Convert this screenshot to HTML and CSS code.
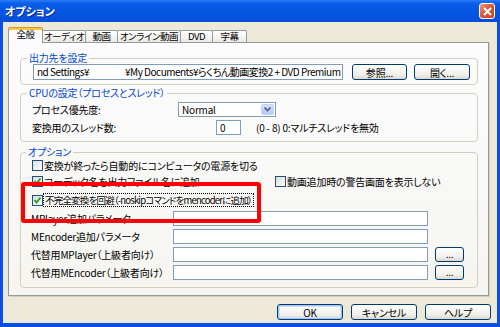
FILE: index.html
```html
<!DOCTYPE html>
<html lang="ja">
<head>
  <meta charset="UTF-8">
  <title>オプション</title>
  <link rel="stylesheet" href="styles.css">
</head>
<body>
<div class="window">
  <div class="titlebar">
    <span class="title">オプション</span>
    <span class="close">
      <svg width="9" height="9" viewBox="0 0 9 9"><path d="M1 1 L8 8 M8 1 L1 8" stroke="#fff" stroke-width="2" fill="none"/></svg>
    </span>
  </div>

  <div class="client">
    <div class="tabs">
      <div class="tab active">全般</div>
      <div class="tab">オーディオ</div>
      <div class="tab">動画</div>
      <div class="tab">オンライン動画</div>
      <div class="tab">DVD</div>
      <div class="tab">字幕</div>
    </div>

    <div class="panel">
      <!-- output folder -->
      <fieldset class="group group-output">
        <legend>出力先を設定</legend>
        <div class="row">
          <div class="textbox path">nd Settings¥<span class="masked"></span>¥My Documents¥らくちん動画変換2 + DVD Premium</div>
          <button class="btn btn-browse">参照...</button>
          <button class="btn btn-open">開く...</button>
        </div>
      </fieldset>

      <!-- cpu -->
      <fieldset class="group group-cpu">
        <legend>CPUの設定（プロセスとスレッド）</legend>
        <div class="row">
          <span class="label label-priority">プロセス優先度:</span>
          <div class="combo">
            <span class="value">Normal</span>
            <span class="drop">
              <svg width="7" height="5" viewBox="0 0 7 5"><path d="M0.5 0.5 L3.5 3.5 L6.5 0.5" stroke="#4d6185" stroke-width="1.6" fill="none"/></svg>
            </span>
          </div>
        </div>
        <div class="row">
          <span class="label label-threads">変換用のスレッド数:</span>
          <div class="textbox threads">0</div>
          <span class="hint">(0 - 8) 0:マルチスレッドを無効</span>
        </div>
      </fieldset>

      <!-- options -->
      <fieldset class="group group-options">
        <legend>オプション</legend>
        <div class="opt opt-first">
          <label class="checkline"><span class="check"></span>変換が終ったら自動的にコンピュータの電源を切る</label>
        </div>
        <div class="opt opt-two">
          <label class="checkline codec"><span class="check checked"><svg width="9" height="9" viewBox="0 0 9 9"><path d="M1.5 4 L3.5 6.5 L7.5 1.5" stroke="#21a121" stroke-width="1.8" fill="none"/></svg></span>コーデック名を出力ファイル名に追加</label>
          <label class="checkline"><span class="check"></span>動画追加時の警告画面を表示しない</label>
        </div>
        <div class="opt">
          <label class="checkline"><span class="check checked"><svg width="9" height="9" viewBox="0 0 9 9"><path d="M1.5 4 L3.5 6.5 L7.5 1.5" stroke="#21a121" stroke-width="1.8" fill="none"/></svg></span><span class="focus">不完全変換を回避（-noskipコマンドをmencoderに追加）</span></label>
        </div>
        <div class="opt param">
          <span class="label">MPlayer追加パラメータ</span>
          <div class="textbox wide"></div>
        </div>
        <div class="opt param">
          <span class="label">MEncoder追加パラメータ</span>
          <div class="textbox wide"></div>
        </div>
        <div class="opt param">
          <span class="label">代替用MPlayer（上級者向け）</span>
          <div class="textbox wide"></div>
          <button class="btn btn-small">...</button>
        </div>
        <div class="opt param">
          <span class="label">代替用MEncoder（上級者向け）</span>
          <div class="textbox wide"></div>
          <button class="btn btn-small">...</button>
        </div>
      </fieldset>
    </div>

    <div class="footer">
      <button class="btn btn-dialog btn-default">OK</button>
      <button class="btn btn-dialog">キャンセル</button>
      <button class="btn btn-dialog">ヘルプ</button>
    </div>
  </div>

  <div class="callout"></div>
</div>
</body>
</html>
```

FILE: styles.css
```css
* { margin: 0; padding: 0; box-sizing: border-box; }
body {
  font-family: "Noto Sans CJK JP", "Noto Sans", sans-serif;
  font-size: 10px;
  font-feature-settings: "palt";
  letter-spacing: -0.2px;
  color: #000;
  background: #fff;
}

.window {
  position: relative;
  width: 500px;
  height: 327px;
  background: #0a4fe2;
  display: flex;
  flex-direction: column;
}

.titlebar {
  flex: none;
  height: 22px;
  display: flex;
  align-items: center;
  justify-content: space-between;
  padding: 0 5px;
  background: linear-gradient(#2a7cf4 0%, #0a5eea 15%, #0458e4 45%, #0453dc 75%, #0650d6 100%);
}

.title {
  color: #fff;
  font-weight: bold;
  font-size: 11px;
  letter-spacing: 0;
  text-shadow: 1px 1px 0 #0a2a9c;
}

.close {
  width: 16px;
  height: 16px;
  border: 1px solid #fff;
  border-radius: 3px;
  background: linear-gradient(135deg, #eb9a80, #db5d3a 45%, #c8421e);
  display: flex;
  align-items: center;
  justify-content: center;
}

.client {
  flex: 1;
  margin: 0 3px 4px;
  background: #ece9d8;
  padding: 5px 8px 3px 5px;
  display: flex;
  flex-direction: column;
}

/* Tabs */
.tabs {
  flex: none;
  height: 15px;
  display: flex;
  align-items: flex-end;
  position: relative;
  z-index: 1;
}

.tab {
  flex: none;
  height: 12px;
  font-size: 9.5px;
  line-height: 11px;
  text-align: center;
  white-space: nowrap;
  letter-spacing: -0.4px;
  border: 1px solid #919b9c;
  border-bottom: none;
  border-radius: 2px 2px 0 0;
  background: linear-gradient(#fff, #f4f3ef 60%, #eae8e0);
}

.tab + .tab { margin-left: -1px; }
.tab:nth-child(1) { width: 35px; }
.tab:nth-child(2) { width: 44px; }
.tab:nth-child(3) { width: 33px; }
.tab:nth-child(4) { width: 64px; }
.tab:nth-child(5) { width: 33px; }
.tab:nth-child(6) { width: 35px; }

.tab.active {
  height: 16px;
  margin-bottom: -1px;
  line-height: 13px;
  background: #fcfcfe;
  border-top: 1px solid #e68b2c;
  box-shadow: inset 0 2px 0 #ffc73c;
  position: relative;
  z-index: 1;
}

.panel {
  flex: 1;
  border: 1px solid #919b9c;
  background: linear-gradient(#fcfcfe, #f6f5f0);
  padding: 9px 10px 0 11px;
  box-shadow: 1px 1px 0 #d3cfbc;
}

/* Group boxes */
.group {
  border: 1px solid #d0d0bf;
  border-radius: 4px;
  padding: 0 7px 4px 11px;
}

.group legend {
  color: #0046d5;
  line-height: 12px;
  padding: 0 2px;
  margin-left: -5px;
}

.row {
  display: flex;
  align-items: center;
}

.textbox {
  height: 15px;
  border: 1px solid #7f9db9;
  background: #fff;
  padding: 0 3px;
  line-height: 13px;
  white-space: nowrap;
  overflow: hidden;
}

.btn {
  font-family: inherit;
  font-size: 10px;
  font-feature-settings: "palt";
  letter-spacing: -0.2px;
  color: #000;
  height: 16px;
  line-height: 13px;
  border: 1px solid #003c74;
  border-radius: 3px;
  background: linear-gradient(#fff, #f0efea 70%, #dcd8cd);
}

.group-output .row { padding-left: 1px; height: 16px; }
.path { width: 310px; height: 16px; line-height: 14px; letter-spacing: -0.5px; }
.masked { display: inline-block; width: 36px; }
.btn-browse { width: 55px; margin-left: 9px; }
.btn-open { width: 56px; margin-left: 7px; }

.group-cpu { margin-top: 2px; padding-top: 3px; padding-bottom: 6px; }
.group-cpu .row { height: 15px; }
.group-cpu .row + .row { margin-top: 3px; }
.label-priority { width: 146px; }
.label-threads { width: 184px; }

.combo {
  width: 98px;
  height: 15px;
  border: 1px solid #7f9db9;
  background: #fff;
  display: flex;
}
.combo .value { flex: 1; padding-left: 3px; line-height: 13px; }
.combo .drop {
  width: 13px;
  margin: 1px;
  border-radius: 2px;
  background: linear-gradient(#d3e0fd, #b5c9f6);
  border: 1px solid #c3d3fb;
  display: flex;
  align-items: center;
  justify-content: center;
}

.threads { width: 25px; }
.hint { margin-left: 15px; }

.group-options { margin-top: 4px; padding-left: 10px; padding-bottom: 6px; }

.opt {
  height: 18px;
  display: flex;
  align-items: center;
}
.opt-first { height: 14px; }
.opt-two { height: 19px; }

.checkline {
  display: flex;
  align-items: center;
  padding-left: 1px;
}
.codec { width: 243px; }

.check {
  flex: none;
  width: 11px;
  height: 11px;
  margin-right: 1px;
  border: 1px solid #1c5180;
  background: linear-gradient(135deg, #dcdcd7, #fff);
  display: flex;
  align-items: center;
  justify-content: center;
}

.focus {
  outline: 1px dotted #000;
  outline-offset: 0;
  padding: 0 1px;
  font-size: 9.5px;
  line-height: 12px;
  letter-spacing: -0.8px;
}

.param .label { width: 142px; }
.wide { width: 255px; }
.btn-small { width: 29px; height: 15px; margin-left: 7px; line-height: 10px; }

.footer {
  flex: none;
  display: flex;
  justify-content: flex-end;
  gap: 8px;
  margin: 8px -2px 0 0;
}

.btn-dialog { width: 66px; }
.btn-default { box-shadow: inset 0 0 0 1px #a8c4f0, inset 0 0 0 2px #cfdff8; }

/* annotation drawn over the dialog */
.callout {
  position: absolute;
  left: 21px;
  top: 182px;
  width: 240px;
  height: 41px;
  border: 4px solid #f00;
  border-radius: 3px;
}
```
